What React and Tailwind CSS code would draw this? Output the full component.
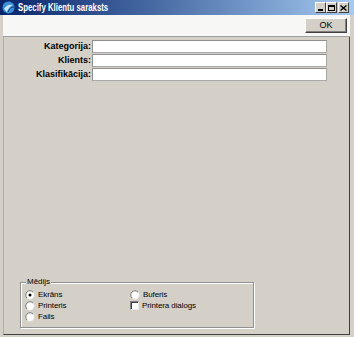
import React from "react";

function Radio({ checked }) {
  return (
    <svg width="10" height="10" viewBox="0 0 10 10" className="block shrink-0">
      <circle cx="5" cy="5" r="4.2" fill="#ffffff" stroke="#e4e2dc" strokeWidth="0.8" />
      <path d="M8 2 A4.2 4.2 0 0 0 2 8" stroke="#7a7a7a" fill="none" strokeWidth="1" />
      {checked && <circle cx="5" cy="5" r="1.5" fill="#000000" />}
    </svg>
  );
}

function Check() {
  return (
    <span className="block w-[9px] h-[9px] shrink-0 bg-white border border-t-[#808080] border-l-[#808080] border-r-[#e8e8e8] border-b-[#e8e8e8] shadow-[inset_1px_1px_0_#404040]" />
  );
}

function WinBtn({ children }) {
  return (
    <div className="w-[11px] h-[11px] bg-[#d4d0c8] border border-t-white border-l-white border-r-[#404040] border-b-[#404040] flex items-center justify-center">
      {children}
    </div>
  );
}

export default function App() {
  const font = { fontFamily: '"Liberation Sans", Arial, sans-serif' };
  return (
    <div className="w-[354px] h-[337px] bg-[#d4d0c8] flex flex-col overflow-hidden" style={font}>
      {/* Title bar */}
      <div className="h-[15px] flex items-center bg-gradient-to-r from-[#0a246a] to-[#a6caf0] pl-[2px] pr-[5px]">
        <svg width="13" height="13" viewBox="0 0 13 13" className="mr-[3px] shrink-0">
          <circle cx="6.5" cy="6.5" r="6" fill="#3b8fd6" />
          <path d="M2 8 C4 4 8 3 11 4 C8 5 6 8 5 11 Z" fill="#c8e6ff" />
          <path d="M6 11 C7 8 9 6 12 6" stroke="#0b3d7a" fill="none" strokeWidth="1" />
        </svg>
        <span className="inline-block origin-left scale-x-[0.78] whitespace-nowrap text-white font-bold text-[10px] leading-none">Specify Klientu saraksts</span>
        <div className="ml-auto flex items-center">
          <WinBtn>
            <span className="block w-[5px] h-[2px] bg-black mt-[5px]" />
          </WinBtn>
          <WinBtn>
            <span className="block w-[7px] h-[6px] border border-black border-t-2" />
          </WinBtn>
          <div className="w-[1px]" />
          <WinBtn>
            <svg width="7" height="6" viewBox="0 0 7 6">
              <path d="M0.5 0.5 L6.5 5.5 M6.5 0.5 L0.5 5.5" stroke="#000" strokeWidth="1.4" />
            </svg>
          </WinBtn>
        </div>
      </div>
      {/* Toolbar */}
      <div className="h-[22px] bg-[#f7f7f5] border-b border-b-[#a0a0a0] flex items-center justify-end pr-[3px] ml-[3px] mr-[4px]">
        <div className="w-[42px] h-[15px] bg-[#d4d0c8] border border-t-white border-l-white border-r-[#404040] border-b-[#404040] shadow-[inset_-1px_-1px_0_#808080] flex items-center justify-center text-[9px] leading-none text-black">
          OK
        </div>
      </div>
      {/* Body */}
      <div className="flex-1 flex flex-col ml-[3px] mr-[4px] mb-[2px] border-l border-l-[#b0aca4] border-r border-r-[#404040] border-b border-b-[#404040]">
        <div className="pt-[3px] flex flex-col gap-[1px]">
          {["Kategorija:", "Klients:", "Klasifikācija:"].map((l) => (
            <div key={l} className="flex items-center h-[13px]">
              <span className="w-[88px] text-right font-bold text-[9px] leading-none text-black pr-[1px]">{l}</span>
              <div className="w-[235px] h-[13px] bg-white border border-t-[#909090] border-l-[#909090] border-r-[#a8a8a8] border-b-[#a8a8a8]" />
            </div>
          ))}
        </div>
        <div className="flex-1" />
        <div className="relative ml-[16px] w-[234px] h-[46px] mb-[6px] border border-[#909090] shadow-[1px_1px_0_#ffffff,inset_1px_1px_0_#ffffff]">
          <span className="absolute left-[5px] top-[-5px] bg-[#d4d0c8] px-[1px] text-[8px] leading-none text-black">Mēdijs</span>
          <div className="grid grid-cols-[105px_1fr] pl-[4px] pt-[6px] text-[8px] leading-none text-black tracking-[-0.1px]">
            <div className="flex items-center gap-[3px] h-[11px]"><Radio checked /><span>Ekrāns</span></div>
            <div className="flex items-center gap-[3px] h-[11px]"><Radio /><span>Buferis</span></div>
            <div className="flex items-center gap-[3px] h-[11px]"><Radio /><span>Printeris</span></div>
            <div className="flex items-center gap-[3px] h-[11px]"><Check /><span>Printera dialogs</span></div>
            <div className="flex items-center gap-[3px] h-[11px]"><Radio /><span>Fails</span></div>
          </div>
        </div>
      </div>
    </div>
  );
}
